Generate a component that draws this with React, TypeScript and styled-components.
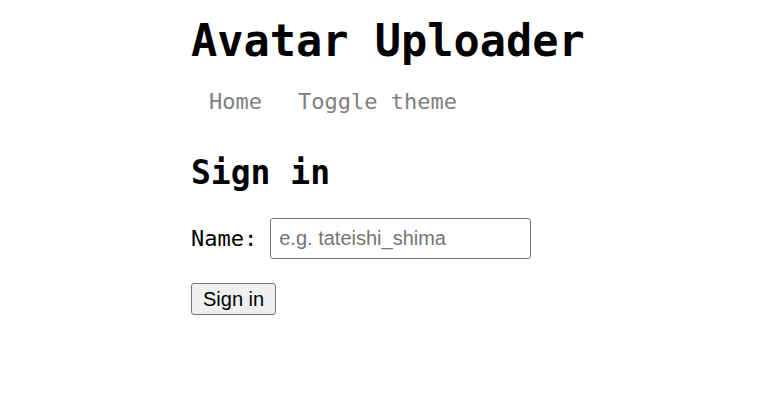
import React from 'react';
import styled, { createGlobalStyle } from 'styled-components';

const mono = `'DejaVu Sans Mono', 'Liberation Mono', monospace`;
const sans = `'Liberation Sans', Arial, sans-serif`;

const GlobalStyle = createGlobalStyle`
  body {
    margin: 0;
    background: #ffffff;
    color: #000000;
    font-family: ${mono};
  }
`;

const Page = styled.main`
  max-width: 401px;
  margin: 0 auto;
  display: flex;
  flex-direction: column;
`;

const Title = styled.h1`
  margin: 13px 0 0;
  font-size: 43.6px;
  line-height: 56px;
  font-weight: bold;
  white-space: nowrap;
`;

const Nav = styled.nav`
  display: flex;
  margin-top: 18px;
`;

const NavLink = styled.a`
  font-size: 22px;
  line-height: 30px;
  color: #808080;
  text-decoration: none;
  padding: 0 18px;
  cursor: pointer;
`;

const Heading = styled.h2`
  margin: 36px 0 0;
  font-size: 33px;
  line-height: 40px;
  font-weight: bold;
`;

const Form = styled.form`
  display: flex;
  flex-direction: column;
  align-items: flex-start;
  gap: 24px;
  margin-top: 25px;
`;

const Field = styled.label`
  display: flex;
  align-items: center;
  gap: 13px;
  font-size: 22px;
`;

const Input = styled.input`
  box-sizing: border-box;
  width: 261px;
  height: 41px;
  padding: 0 8px;
  border: 1px solid #767676;
  border-radius: 3px;
  font-family: ${sans};
  font-size: 20px;
  color: #000;

  ::placeholder {
    color: #757575;
  }
`;

const Button = styled.button`
  box-sizing: border-box;
  height: 32px;
  padding: 0 11px;
  border: 1px solid #767676;
  border-radius: 3px;
  background: #efefef;
  font-family: ${sans};
  font-size: 20px;
  color: #000;
`;

const App: React.FC = () => (
  <>
    <GlobalStyle />
    <Page>
      <Title>Avatar Uploader</Title>
      <Nav>
        <NavLink href="#">Home</NavLink>
        <NavLink href="#">Toggle theme</NavLink>
      </Nav>
      <Heading>Sign in</Heading>
      <Form onSubmit={(e) => e.preventDefault()}>
        <Field>
          Name:
          <Input type="text" placeholder="e.g. tateishi_shima" />
        </Field>
        <Button type="submit">Sign in</Button>
      </Form>
    </Page>
  </>
);

export default App;
